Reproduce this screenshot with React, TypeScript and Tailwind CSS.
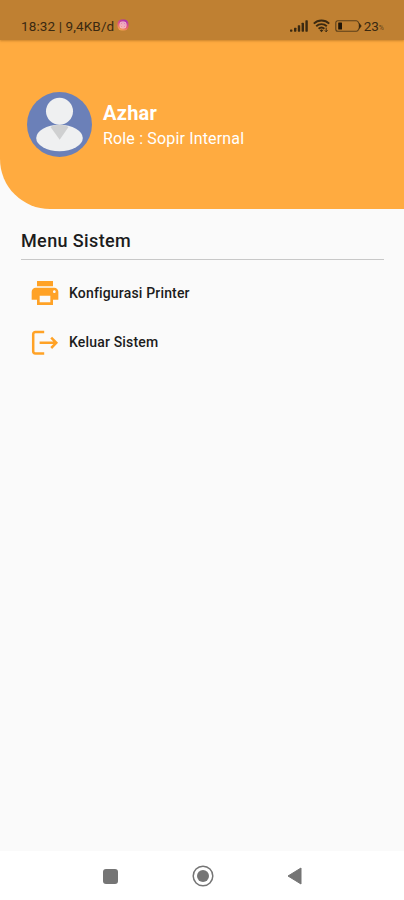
import { MdPrint } from 'react-icons/md';

function PrinterIcon() {
  return <MdPrint className="shrink-0 w-[32px] h-[32px] text-[#ffa226]" />;
}

function LogoutIcon() {
  return (
    <svg className="shrink-0 w-[32px] h-[32px] text-[#ffa226]" viewBox="0 0 32 32" fill="none" stroke="currentColor" strokeWidth="2.5">
      <path d="M15.2 5H6.4A2.2 2.2 0 0 0 4.2 7.2V24.3A2.2 2.2 0 0 0 6.4 26.5H15.2" />
      <path d="M10.6 15.8H27M22.2 10.6L27.3 15.8 22.2 21" />
    </svg>
  );
}

const menuItems = [
  { label: 'Konfigurasi Printer', icon: PrinterIcon },
  { label: 'Keluar Sistem', icon: LogoutIcon },
];

function StatusBar() {
  return (
    <div className="h-10 pt-[17px] pl-[21px] pr-[20px] flex items-start justify-between bg-[#bf8032] text-[#3a2911] shadow-[0_1px_2px_rgba(150,95,25,0.5)]">
      <div className="flex items-center h-[18px] text-[13.5px] leading-[18px]">
        <span className="whitespace-nowrap tracking-[0.12px]">18:32 | 9,4KB/d</span>
        <svg className="ml-[3px] -mt-[2px] w-3 h-3" viewBox="0 0 12 12">
          <defs>
            <linearGradient id="insta" x1="0.3" y1="1" x2="0.7" y2="0">
              <stop offset="0" stopColor="#f5a94c" />
              <stop offset="0.45" stopColor="#e8587a" />
              <stop offset="1" stopColor="#a52db4" />
            </linearGradient>
          </defs>
          <rect x="0.5" y="0.5" width="11" height="11" rx="4.5" fill="url(#insta)" />
          <rect x="3" y="3" width="6" height="6" rx="2" fill="#f3b5c4" fillOpacity="0.55" stroke="#f8d5de" strokeWidth="0.8" />
          <circle cx="6" cy="6" r="1.3" fill="none" stroke="#f8d5de" strokeWidth="0.7" />
        </svg>
      </div>
      <div className="flex items-center h-[18px]">
        <svg className="w-[18px] h-3" viewBox="0 0 18 12" fill="currentColor">
          <rect x="0" y="9.5" width="2.4" height="2.2" rx="0.6" />
          <rect x="4" y="7.7" width="2.4" height="4" rx="0.6" />
          <rect x="7.8" y="5.2" width="2.4" height="6.5" rx="0.6" />
          <rect x="11.6" y="2.7" width="2.4" height="9" rx="0.6" />
          <rect x="15.4" y="0.3" width="2.4" height="11.4" rx="0.6" />
        </svg>
        <svg className="ml-[5px] w-[17px] h-[14px]" viewBox="0 0 17 14" fill="none" stroke="currentColor" strokeWidth="1.9">
          <path d="M0.8 4.6C5 .5 12 .5 16.2 4.6" />
          <path d="M3.2 7.2C6.2 4.4 10.8 4.4 13.8 7.2" />
          <path d="M5.6 9.7C7.3 8.2 9.7 8.2 11.4 9.7" />
          <path d="M8.5 10.2L6.7 11.3 8.5 13.2 10.3 11.3z" fill="currentColor" stroke="none" />
          <path d="M13.2 8.6v4.2M11.8 11.4l1.4 1.4 1.4-1.4" strokeWidth="1" />
        </svg>
        <svg className="ml-[5px] w-[27px] h-3" viewBox="0 0 27 12">
          <path d="M2.8 .8H21.4C22.8 .8 23.3 1.8 23.8 3L26 6 23.8 9C23.3 10.2 22.8 11.2 21.4 11.2H2.8A2 2 0 0 1 .8 9.2V2.8A2 2 0 0 1 2.8 .8z" fill="none" stroke="currentColor" strokeOpacity="0.75" strokeWidth="1.1" />
          <path d="M23.8 3L26.4 6 23.8 9z" fill="currentColor" />
          <rect x="3.2" y="2.4" width="3.8" height="7.2" rx="0.5" fill="#1f1508" />
        </svg>
        <span className="ml-[2px] text-[13.5px] leading-[18px]">23</span>
        <span className="mt-[3px] text-[7px] leading-[18px] opacity-70">%</span>
      </div>
    </div>
  );
}

function Avatar() {
  return (
    <svg className="shrink-0 w-[65px] h-[65px]" viewBox="0 0 65 65">
      <circle cx="32.5" cy="32.5" r="32.5" fill="#6b80b8" />
      <ellipse cx="32.5" cy="46" rx="23.3" ry="13.2" fill="#eff0f1" />
      <path d="M23.5 35C28 32 37 32 41.5 35L32.7 47.8z" fill="#cfd0d1" />
      <circle cx="32.5" cy="19.3" r="13.5" fill="#eff0f1" />
    </svg>
  );
}

function NavigationBar() {
  return (
    <div className="h-[49px] pt-px bg-white flex items-center justify-between pl-[103px] pr-[102px] text-[#757575]">
      <div className="w-[15px] h-[15px] rounded-[3px] bg-[#757575]"></div>
      <svg className="w-[22px] h-[22px]" viewBox="0 0 22 22">
        <circle cx="11" cy="11" r="9.8" fill="none" stroke="currentColor" strokeWidth="1.5" />
        <circle cx="11" cy="11" r="6" fill="currentColor" />
      </svg>
      <svg className="w-[15px] h-[18px]" viewBox="0 0 15 18">
        <path d="M14 1v16L1 9z" fill="currentColor" stroke="currentColor" strokeWidth="1" strokeLinejoin="round" />
      </svg>
    </div>
  );
}

export default function App() {
  return (
    <div className="w-full h-[900px] flex flex-col bg-[#fafafa] font-[Roboto,sans-serif] overflow-hidden">
      {/* Profile header */}
      <header className="h-[209px] shrink-0 bg-[#ffab40] rounded-bl-[50px] overflow-hidden">
        <StatusBar />
        <div className="flex items-start pt-[52px] pl-[27px]">
          <Avatar />
          <div className="ml-[11px] pt-[8px] text-white whitespace-nowrap">
            <h1 className="text-[20px] leading-[26px] font-bold tracking-[0.2px]">Azhar</h1>
            <p className="text-[16px] leading-[25px] tracking-[0.16px]">Role : Sopir Internal</p>
          </div>
        </div>
      </header>

      {/* System menu */}
      <main className="flex-1 px-[21px] pt-[20px]">
        <h2 className="h-[31px] -mr-px text-[18px] leading-6 font-medium tracking-[0.38px] text-[#1c1c1c] border-b border-[#c8c8c8]">
          Menu Sistem
        </h2>
        <ul className="pt-[8.5px] pl-[8px]">
          {menuItems.map(({ label, icon: Icon }) => (
            <li key={label} className="h-[49.5px] flex items-center">
              <Icon />
              <span className="ml-[8px] text-[14px] font-medium tracking-[0.17px] text-[#1c1c1c]">{label}</span>
            </li>
          ))}
        </ul>
      </main>

      <NavigationBar />
    </div>
  );
}
